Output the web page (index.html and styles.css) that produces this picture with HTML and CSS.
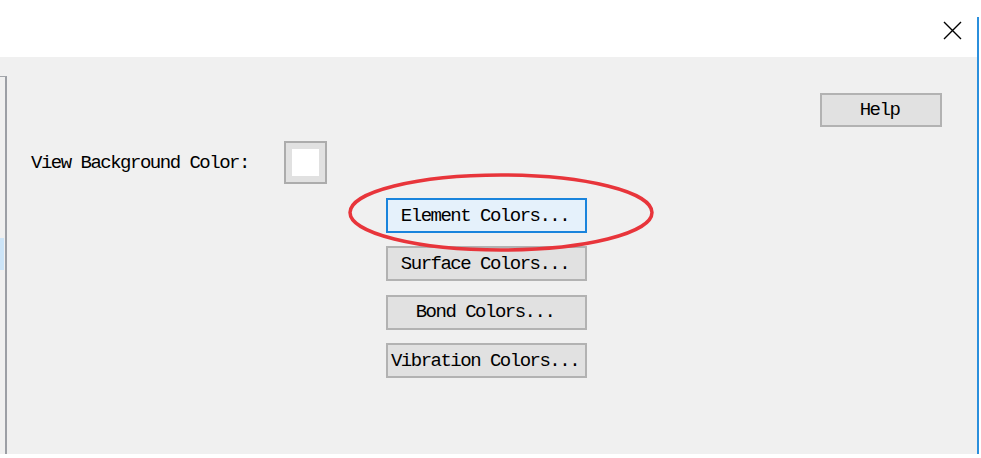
FILE: index.html
```html
<!DOCTYPE html>
<html lang="en">
<head>
  <meta charset="UTF-8" />
  <title>Colors</title>
  <link rel="stylesheet" href="styles.css">
</head>
<body>
  <div class="window">
    <div class="dialog">
      <div class="titlebar">
        <svg class="close" width="19" height="19" viewBox="0 0 19 19">
          <path d="M1 1 L18 18 M18 1 L1 18" stroke="#000" stroke-width="1.4" fill="none"/>
        </svg>
      </div>
      <div class="client">
        <div class="side-pane"><div class="side-sel"></div></div>
        <div class="content">
          <div class="help-row">
            <button class="btn btn-help">Help</button>
          </div>
          <div class="bg-row">
            <span class="label">View Background Color:</span>
            <div class="swatch"><div class="swatch-fill"></div></div>
          </div>
          <div class="btn-list">
            <button class="btn btn-focus">Element Colors...</button>
            <button class="btn">Surface Colors...</button>
            <button class="btn">Bond Colors...</button>
            <button class="btn">Vibration Colors...</button>
            <svg class="mark" width="306" height="79" viewBox="0 0 306 79">
              <ellipse cx="153" cy="39.5" rx="151" ry="37.5" fill="none" stroke="#e8353b" stroke-width="3.5"/>
            </svg>
          </div>
        </div>
      </div>
    </div>
    <div class="edge"></div>
  </div>
</body>
</html>
```

FILE: styles.css
```css
* { box-sizing: border-box; }
body {
  margin: 0;
  background: #fff;
  font-family: 'Liberation Mono', 'DejaVu Sans Mono', monospace;
  font-size: 19px;
  letter-spacing: -1.5px;
  color: #000;
}
.window { display: flex; height: 458px; }
.dialog { width: 977px; display: flex; flex-direction: column; }
.edge {
  width: 2px;
  margin-top: 17px;
  height: 437px;
  background: #2b8fdc;
}
.titlebar {
  height: 57px;
  background: #fff;
  display: flex;
  justify-content: flex-end;
  align-items: flex-start;
  padding: 21px 15px 0 0;
}
.client {
  height: 397px;
  background: #f0f0f0;
  display: flex;
}
.side-pane {
  width: 7px;
  margin-top: 19px;
  border-top: 1px solid #a3a6ab;
  border-right: 2px solid #9c9fa5;
  padding-top: 161px;
}
.side-sel { width: 4px; height: 32px; background: #cce4f7; }
.content { flex: 1; display: flex; flex-direction: column; }
.help-row {
  display: flex;
  justify-content: flex-end;
  padding: 36px 35px 0 0;
}
.btn {
  font: inherit;
  letter-spacing: inherit;
  color: #000;
  width: 201px;
  height: 35px;
  padding: 0 3px 0 0;
  background: #e1e1e1;
  border: 2px solid #b2b2b2;
  border-radius: 0;
}
.btn-help { width: 122px; height: 34px; }
.btn-focus { background: #e5f1fb; border-color: #1a84dc; }
.bg-row {
  display: flex;
  align-items: center;
  margin-top: 14px;
  padding-left: 24px;
}
.label { width: 253px; }
.swatch {
  width: 43px;
  height: 43px;
  border: 2px solid #acacac;
  background: #e1e1e1;
  padding: 6px;
}
.swatch-fill { width: 27px; height: 27px; background: #fff; }
.btn-list {
  position: relative;
  display: flex;
  flex-direction: column;
  gap: 13.4px;
  margin: 14px 0 0 379px;
  width: 201px;
}
.mark {
  position: absolute;
  left: -38px;
  top: -25px;
}
```
